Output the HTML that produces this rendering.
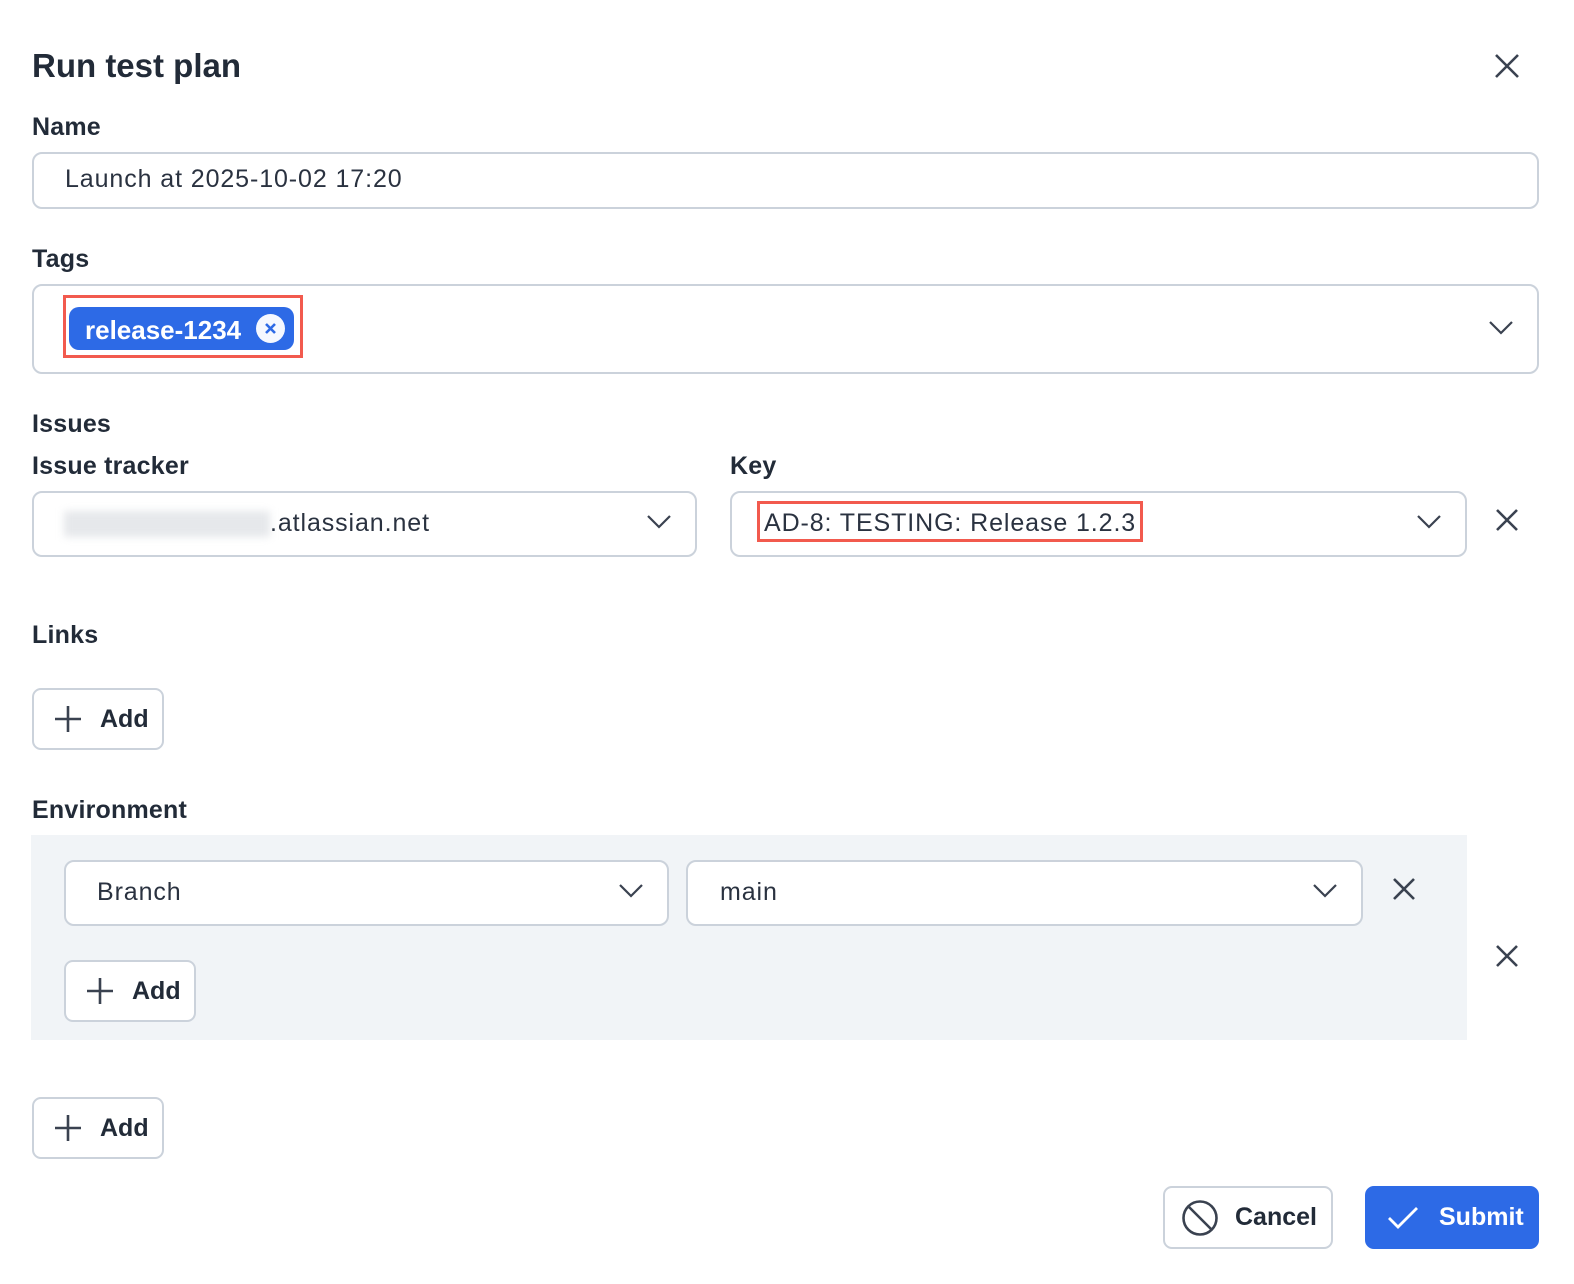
<!DOCTYPE html>
<html><head><meta charset="utf-8"><style>
*{box-sizing:border-box;margin:0;padding:0}
body{width:1574px;height:1284px;background:#fff;font-family:"Liberation Sans",sans-serif;color:#222b38;position:relative;overflow:hidden}
.a{position:absolute}
.lbl{font-size:25px;font-weight:600;color:#222b38;letter-spacing:0.2px}
.box{border:2px solid #cbd2db;border-radius:10px;background:#fff}
.txt{font-size:25px;color:#2a3240;letter-spacing:0.9px}
.btn{border:2px solid #cbd2db;border-radius:9px;background:#fff;font-size:25px;font-weight:600;display:flex;align-items:center}
svg{display:block}
</style></head><body>
<div class="a" style="left:32px;top:47px;font-size:33px;font-weight:600">Run test plan</div>
<svg class="a" style="left:1494px;top:53px" width="26" height="26" viewBox="0 0 26 26"><path d="M2 2L24 24M24 2L2 24" stroke="#3a4250" stroke-width="2.6"/></svg>

<div class="a lbl" style="left:32px;top:113px">Name</div>
<div class="a box" style="left:32px;top:152px;width:1507px;height:57px"></div>
<div class="a txt" style="left:65px;top:165px">Launch at 2025-10-02 17:20</div>

<div class="a lbl" style="left:32px;top:245px">Tags</div>
<div class="a box" style="left:32px;top:284px;width:1507px;height:90px"></div>
<div class="a" style="left:63px;top:295px;width:240px;height:63px;border:3px solid #f25a4e"></div>
<div class="a" style="left:69px;top:307px;width:225px;height:43px;background:#2d6ae6;border-radius:10px"></div>
<div class="a" style="left:85px;top:315px;font-size:26px;font-weight:600;color:#fff">release-1234</div>
<div class="a" style="left:256px;top:314px;width:29px;height:29px;border-radius:50%;background:#f5f8ff"></div>
<svg class="a" style="left:264px;top:322px" width="13" height="13" viewBox="0 0 13 13"><path d="M2 2L11 11M11 2L2 11" stroke="#2d6ae6" stroke-width="2.6"/></svg>
<svg class="a" style="left:1489px;top:321px" width="24" height="14" viewBox="0 0 24 14"><path d="M1 1L12 12L23 1" fill="none" stroke="#3a4250" stroke-width="2.2"/></svg>

<div class="a lbl" style="left:32px;top:410px">Issues</div>
<div class="a lbl" style="left:32px;top:452px">Issue tracker</div>
<div class="a lbl" style="left:730px;top:452px">Key</div>
<div class="a box" style="left:32px;top:491px;width:665px;height:66px"></div>
<div class="a" style="left:64px;top:511px;width:206px;height:26px;background:#e6e8eb;filter:blur(4px)"></div>
<div class="a txt" style="left:270px;top:509px">.atlassian.net</div>
<svg class="a" style="left:647px;top:515px" width="24" height="14" viewBox="0 0 24 14"><path d="M1 1L12 12L23 1" fill="none" stroke="#3a4250" stroke-width="2.2"/></svg>
<div class="a box" style="left:730px;top:491px;width:737px;height:66px"></div>
<div class="a" style="left:757px;top:501px;width:386px;height:41px;border:3px solid #f25a4e"></div>
<div class="a txt" style="left:764px;top:509px">AD-8: TESTING: Release 1.2.3</div>
<svg class="a" style="left:1417px;top:515px" width="24" height="14" viewBox="0 0 24 14"><path d="M1 1L12 12L23 1" fill="none" stroke="#3a4250" stroke-width="2.2"/></svg>
<svg class="a" style="left:1495px;top:508px" width="24" height="24" viewBox="0 0 24 24"><path d="M2 2L22 22M22 2L2 22" stroke="#3a4250" stroke-width="2.6"/></svg>

<div class="a lbl" style="left:32px;top:621px">Links</div>
<div class="a btn" style="left:32px;top:688px;width:132px;height:62px"><svg style="margin:0 18px 0 20px" width="28" height="28" viewBox="0 0 28 28"><path d="M14 1V27M1 14H27" stroke="#3a4250" stroke-width="2.6"/></svg>Add</div>

<div class="a lbl" style="left:32px;top:796px">Environment</div>
<div class="a" style="left:31px;top:835px;width:1436px;height:205px;background:#f1f4f7"></div>
<div class="a box" style="left:64px;top:860px;width:605px;height:66px"></div>
<div class="a txt" style="left:97px;top:878px">Branch</div>
<svg class="a" style="left:619px;top:884px" width="24" height="14" viewBox="0 0 24 14"><path d="M1 1L12 12L23 1" fill="none" stroke="#3a4250" stroke-width="2.2"/></svg>
<div class="a box" style="left:686px;top:860px;width:677px;height:66px"></div>
<div class="a txt" style="left:720px;top:878px">main</div>
<svg class="a" style="left:1313px;top:884px" width="24" height="14" viewBox="0 0 24 14"><path d="M1 1L12 12L23 1" fill="none" stroke="#3a4250" stroke-width="2.2"/></svg>
<svg class="a" style="left:1392px;top:877px" width="24" height="24" viewBox="0 0 24 24"><path d="M2 2L22 22M22 2L2 22" stroke="#3a4250" stroke-width="2.6"/></svg>
<div class="a btn" style="left:64px;top:960px;width:132px;height:62px"><svg style="margin:0 18px 0 20px" width="28" height="28" viewBox="0 0 28 28"><path d="M14 1V27M1 14H27" stroke="#3a4250" stroke-width="2.6"/></svg>Add</div>
<svg class="a" style="left:1495px;top:944px" width="24" height="24" viewBox="0 0 24 24"><path d="M2 2L22 22M22 2L2 22" stroke="#3a4250" stroke-width="2.6"/></svg>

<div class="a btn" style="left:32px;top:1097px;width:132px;height:62px"><svg style="margin:0 18px 0 20px" width="28" height="28" viewBox="0 0 28 28"><path d="M14 1V27M1 14H27" stroke="#3a4250" stroke-width="2.6"/></svg>Add</div>

<div class="a btn" style="left:1163px;top:1186px;width:170px;height:63px"><svg style="margin:0 16px 0 16px" width="38" height="38" viewBox="0 0 38 38"><circle cx="19" cy="19" r="16.5" fill="none" stroke="#3a4250" stroke-width="2.6"/><path d="M7.5 7.5L30.5 30.5" stroke="#3a4250" stroke-width="2.6"/></svg>Cancel</div>
<div class="a btn" style="left:1365px;top:1186px;width:174px;height:63px;background:#2d6ae6;border-color:#2d6ae6;color:#fff"><svg style="margin:0 20px 0 20px" width="32" height="24" viewBox="0 0 32 24"><path d="M2 12L11 21L30 2" fill="none" stroke="#fff" stroke-width="2.8"/></svg>Submit</div>
</body></html>
